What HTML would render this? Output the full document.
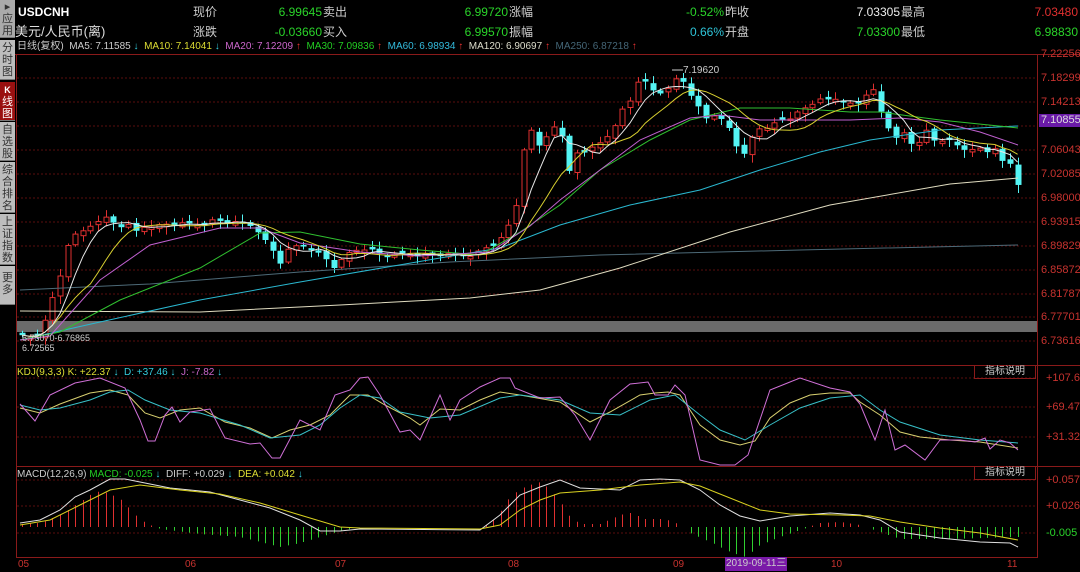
<!DOCTYPE html>
<html><head><meta charset="utf-8">
<style>
*{margin:0;padding:0;box-sizing:border-box}
body{width:1080px;height:571px;background:#000;overflow:hidden;position:relative;font-family:"Liberation Sans","Noto Sans CJK SC",sans-serif;font-size:12px;color:#ccc}
.t{position:absolute;white-space:nowrap;line-height:14px;z-index:2}
.sb{position:absolute;left:0;width:15px;background:#bdbdbd;color:#333;font-size:11px;line-height:12px;text-align:center;border-bottom:1px solid #777;z-index:2}
.r{text-align:right}
.ax{position:absolute;left:1041px;color:#c8332f;font-size:11px;line-height:12px;z-index:2}
svg{position:absolute;left:0;top:0;z-index:1}
</style></head><body>
<div class="sb" style="top:0;height:38px;padding-top:1px;background:#aaa">▸<br>应<br>用</div>
<div class="sb" style="top:40px;height:40px;padding-top:2px">分<br>时<br>图</div>
<div class="sb" style="top:82px;height:39px;padding-top:2px;background:#9a1010;color:#fff"><b style="font-size:9px">K</b><br>线<br>图</div>
<div class="sb" style="top:122px;height:39px;padding-top:2px">自<br>选<br>股</div>
<div class="sb" style="top:162px;height:51px;padding-top:2px">综<br>合<br>排<br>名</div>
<div class="sb" style="top:214px;height:51px;padding-top:2px">上<br>证<br>指<br>数</div>
<div class="sb" style="top:266px;height:39px;padding-top:6px">更<br>多</div>

<svg id="s" width="1080" height="571" xmlns="http://www.w3.org/2000/svg">
<g stroke="#5a0e0e" stroke-width="1" stroke-dasharray="2,2">
<line x1="17" y1="78" x2="1037" y2="78"/><line x1="17" y1="102" x2="1037" y2="102"/><line x1="17" y1="126" x2="1037" y2="126"/><line x1="17" y1="150" x2="1037" y2="150"/><line x1="17" y1="174" x2="1037" y2="174"/><line x1="17" y1="198" x2="1037" y2="198"/><line x1="17" y1="222" x2="1037" y2="222"/><line x1="17" y1="246" x2="1037" y2="246"/><line x1="17" y1="270" x2="1037" y2="270"/><line x1="17" y1="294" x2="1037" y2="294"/><line x1="17" y1="317" x2="1037" y2="317"/><line x1="17" y1="341" x2="1037" y2="341"/>
<line x1="17" y1="378" x2="1037" y2="378"/><line x1="17" y1="407" x2="1037" y2="407"/><line x1="17" y1="437" x2="1037" y2="437"/>
<line x1="17" y1="480" x2="1037" y2="480"/><line x1="17" y1="506" x2="1037" y2="506"/><line x1="17" y1="533" x2="1037" y2="533"/>
</g>
<g stroke="#8a1a1a" stroke-width="1" fill="none">
<line x1="0" y1="54.5" x2="1080" y2="54.5"/>
<line x1="16.5" y1="54" x2="16.5" y2="558"/>
<line x1="1037.5" y1="54" x2="1037.5" y2="558"/>
<line x1="16" y1="365.5" x2="1080" y2="365.5"/>
<line x1="16" y1="466.5" x2="1080" y2="466.5"/>
<line x1="16" y1="557.5" x2="1038" y2="557.5"/>
</g>
<rect x="17" y="321" width="1020" height="11" fill="#6b6b6b"/>
<g id="g"></g>
</svg>

<div class="t" style="left:18px;top:5px;color:#fff;font-weight:bold">USDCNH</div>
<div class="t" style="left:15px;top:25px;color:#ddd;font-size:13px">美元/人民币(离)</div>
<div class="t" style="left:193px;top:5px">现价</div>
<div class="t" style="left:193px;top:25px">涨跌</div>
<div class="t r" style="left:250px;width:72px;top:5px;color:#2ad42a">6.99645</div>
<div class="t r" style="left:250px;width:72px;top:25px;color:#2ad42a">-0.03660</div>
<div class="t" style="left:323px;top:5px">卖出</div>
<div class="t" style="left:323px;top:25px">买入</div>
<div class="t r" style="left:436px;width:72px;top:5px;color:#2ad42a">6.99720</div>
<div class="t r" style="left:436px;width:72px;top:25px;color:#2ad42a">6.99570</div>
<div class="t" style="left:509px;top:5px">涨幅</div>
<div class="t" style="left:509px;top:25px">振幅</div>
<div class="t r" style="left:652px;width:72px;top:5px;color:#2ad42a">-0.52%</div>
<div class="t r" style="left:652px;width:72px;top:25px;color:#2fc4d8">0.66%</div>
<div class="t" style="left:725px;top:5px">昨收</div>
<div class="t" style="left:725px;top:25px">开盘</div>
<div class="t r" style="left:828px;width:72px;top:5px;color:#eee">7.03305</div>
<div class="t r" style="left:828px;width:72px;top:25px;color:#2ad42a">7.03300</div>
<div class="t" style="left:901px;top:5px">最高</div>
<div class="t" style="left:901px;top:25px">最低</div>
<div class="t r" style="left:1006px;width:72px;top:5px;color:#e03030">7.03480</div>
<div class="t r" style="left:1006px;width:72px;top:25px;color:#2ad42a">6.98830</div>

<div class="t" style="left:17px;top:40px;font-size:10px;color:#ccc">日线(复权)&nbsp; MA5: 7.11585 <span style="color:#3cd">↓</span>&nbsp;&nbsp;<span style="color:#dd3">MA10: 7.14041</span> <span style="color:#3cd">↓</span>&nbsp;&nbsp;<span style="color:#c6c">MA20: 7.12209</span> <span style="color:#e33">↑</span>&nbsp;&nbsp;<span style="color:#2c2">MA30: 7.09836</span> <span style="color:#e33">↑</span>&nbsp;&nbsp;<span style="color:#3bd">MA60: 6.98934</span> <span style="color:#e33">↑</span>&nbsp;&nbsp;<span style="color:#ddc">MA120: 6.90697</span> <span style="color:#e33">↑</span>&nbsp;&nbsp;<span style="color:#467">MA250: 6.87218</span> <span style="color:#e33">↑</span></div>

<div class="ax" style="top:48px">7.22256</div>
<div class="ax" style="top:72px">7.18299</div>
<div class="ax" style="top:96px">7.14213</div>
<div class="ax" style="top:144px">7.06043</div>
<div class="ax" style="top:168px">7.02085</div>
<div class="ax" style="top:192px">6.98000</div>
<div class="ax" style="top:216px">6.93915</div>
<div class="ax" style="top:240px">6.89829</div>
<div class="ax" style="top:264px">6.85872</div>
<div class="ax" style="top:288px">6.81787</div>
<div class="ax" style="top:311px">6.77701</div>
<div class="ax" style="top:335px">6.73616</div>
<div class="ax" style="top:114px;left:1039px;width:41px;height:13px;background:#6a1aa8;color:#ddd;padding-left:2px">7.10855</div>
<div class="ax" style="top:372px;left:1046px">+107.6</div>
<div class="ax" style="top:401px;left:1046px">+69.47</div>
<div class="ax" style="top:431px;left:1046px">+31.32</div>
<div class="ax" style="top:474px;left:1046px">+0.057</div>
<div class="ax" style="top:500px;left:1046px">+0.026</div>
<div class="ax" style="top:527px;left:1046px;color:#2ad42a">-0.005</div>

<div class="t" style="left:17px;top:366px;font-size:10px;color:#dd3">KDJ(9,3,3) K: +22.37 <span style="color:#3cd">↓</span>&nbsp; <span style="color:#3cd">D: +37.46 ↓</span>&nbsp; <span style="color:#c6c">J: -7.82</span> <span style="color:#3cd">↓</span></div>
<div class="t" style="left:17px;top:468px;font-size:10px;color:#ccc">MACD(12,26,9) <span style="color:#2c2">MACD: -0.025</span> <span style="color:#3cd">↓</span>&nbsp; DIFF: +0.029 <span style="color:#3cd">↓</span>&nbsp; <span style="color:#dd3">DEA: +0.042</span> <span style="color:#3cd">↓</span></div>
<div class="t" style="left:974px;top:366px;width:62px;height:13px;border:1px solid #8a1a1a;border-top:none;font-size:10px;line-height:12px;text-align:center">指标说明</div>
<div class="t" style="left:974px;top:467px;width:62px;height:13px;border:1px solid #8a1a1a;border-top:none;font-size:10px;line-height:12px;text-align:center">指标说明</div>

<div class="t" style="left:18px;top:558px;color:#c8332f;font-size:10px">05</div>
<div class="t" style="left:185px;top:558px;color:#c8332f;font-size:10px">06</div>
<div class="t" style="left:335px;top:558px;color:#c8332f;font-size:10px">07</div>
<div class="t" style="left:508px;top:558px;color:#c8332f;font-size:10px">08</div>
<div class="t" style="left:673px;top:558px;color:#c8332f;font-size:10px">09</div>
<div class="t" style="left:725px;top:557px;background:#7a1aa8;color:#ccc;font-size:10px;padding:0 1px">2019-09-11三</div>
<div class="t" style="left:831px;top:558px;color:#c8332f;font-size:10px">10</div>
<div class="t" style="left:1007px;top:558px;color:#c8332f;font-size:10px">11</div>
<div class="t" style="left:683px;top:64px;color:#ccc;font-size:10px">7.19620</div>
<div class="t" style="left:22px;top:331px;color:#ccc;font-size:9px">6.75070-6.76865</div>
<div class="t" style="left:22px;top:341px;color:#ccc;font-size:9px">6.72565</div>

<script>
(function(){
var NS="http://www.w3.org/2000/svg",G=document.getElementById("g");
function el(t,a){var e=document.createElementNS(NS,t);for(var k in a)e.setAttribute(k,a[k]);G.appendChild(e);return e}
function pl(pts,c,w){el("polyline",{points:pts.map(function(p){return p[0]+","+p[1]}).join(" "),fill:"none",stroke:c,"stroke-width":w||1})}
function interp(k,x){for(var i=0;i<k.length-1;i++){if(x<=k[i+1][0]){var a=k[i],b=k[i+1];return a[1]+(b[1]-a[1])*(x-a[0])/(b[0]-a[0])}}return k[k.length-1][1]}
var K=[[22,337],[30,338],[37,336],[45,318],[52,300],[60,276],[67,245],[75,236],[82,232],[90,226],[97,220],[105,218],[112,222],[120,226],[128,226],[135,232],[143,227],[150,225],[158,226],[165,224],[175,225],[190,224],[200,225],[215,220],[225,222],[240,224],[255,226],[262,238],[270,246],[280,263],[290,248],[300,245],[310,248],[320,255],[330,262],[336,270],[345,255],[355,250],[365,248],[375,252],[385,256],[395,256],[405,253],[420,255],[440,255],[460,256],[475,254],[485,248],[495,244],[505,236],[512,215],[518,200],[523,150],[530,128],[537,148],[545,137],[552,130],[560,125],[567,178],[575,150],[583,155],[591,148],[598,142],[605,140],[612,135],[620,110],[628,105],[635,85],[643,80],[650,85],[658,97],[665,92],[672,85],[680,70],[688,95],[695,100],[703,115],[710,120],[718,115],[725,125],[733,130],[740,160],[748,150],[755,125],[763,130],[770,130],[778,118],[785,120],[793,115],[800,112],[808,105],[815,102],[823,100],[830,100],[838,98],[845,102],[852,105],[860,103],[868,90],[875,92],[883,120],[890,130],[898,138],[905,133],[913,147],[920,140],[928,130],[935,143],[943,140],[950,138],[958,148],[965,150],[973,148],[980,150],[988,153],[995,148],[1003,160],[1010,165],[1018,186]];
var N=132,cl=[],xs=[];
for(var i=0;i<N;i++){var x=22+i*7.6;xs.push(x);cl.push(interp(K,x)+((i*37)%7-3)*0.6)}
var prev=cl[0]+3;
for(var i=0;i<N;i++){var o=prev+(((i*13)%5)-2)*0.8,c=cl[i];if(Math.abs(o-c)<1.5){o=c+((i%2)?2.5:-2.5)}
var up=c<o,col=up?"#e03030":"#54f4f4",xx=Math.round(xs[i])+0.5,tp=Math.min(o,c),bt=Math.max(o,c);
var hi=tp-2-((i*7)%6),lo=bt+2+((i*11)%7);
el("line",{x1:xx,y1:hi,x2:xx,y2:lo,stroke:col});
if(up)el("rect",{x:xx-2.5,y:tp,width:5,height:bt-tp,fill:"#000",stroke:col});
else el("rect",{x:xx-3,y:tp,width:6,height:Math.max(1,bt-tp),fill:col});
prev=c}
function ma(n){var r=[];for(var i=0;i<N;i++){var s=0,m=0;for(var j=Math.max(0,i-n+1);j<=i;j++){s+=cl[j];m++}r.push([xs[i],(s/m).toFixed(1)])}return r}
pl([[20,290],[150,284],[300,272],[450,262],[600,255],[800,250],[1018,245]],"#4d6a78");
pl([[20,311],[200,312],[340,305],[470,298],[540,290],[620,268],[730,232],[830,205],[950,184],[1018,178]],"#e0dcc0");
pl([[20,340],[100,322],[200,300],[300,282],[440,258],[500,248],[560,225],[630,205],[700,190],[760,170],[820,152],[870,140],[940,130],[1018,126]],"#2ab8d0");
pl([[20,340],[60,332],[120,300],[200,268],[260,233],[300,232],[360,244],[420,250],[480,255],[520,232],[560,205],[600,170],[650,140],[690,120],[740,108],[790,108],[850,112],[880,112],[940,120],[1018,128]],"#30c030");
pl([[20,340],[50,336],[100,280],[150,245],[220,228],[260,228],[300,243],[360,252],[420,256],[490,252],[530,226],[560,200],[600,170],[640,140],[690,118],[720,115],[760,120],[800,120],[850,120],[900,118],[940,122],[980,132],[1018,145]],"#c060d0");
pl(ma(10),"#d8d030");pl(ma(5),"#e8e8e8");
el("line",{x1:672,y1:70,x2:683,y2:70,stroke:"#ccc"});
pl([[20,408],[40,413],[60,404],[90,393],[110,390],[128,395],[145,413],[160,418],[180,410],[200,408],[225,422],[250,428],[272,438],[290,430],[310,425],[330,415],[350,395],[368,395],[385,405],[410,418],[420,425],[440,409],[460,410],[480,400],[500,392],[520,395],[560,402],[590,422],[610,412],[640,395],[655,393],[668,392],[680,395],[700,425],[720,440],[740,445],[755,441],[770,418],[790,403],[810,395],[830,393],[850,393],[860,402],[880,415],[900,432],[920,437],[950,440],[980,442],[1018,448]],"#d8d070");
pl([[20,405],[40,410],[60,408],[90,400],[110,392],[128,390],[145,400],[170,410],[200,413],[240,425],[270,438],[300,435],[320,425],[340,408],[360,395],[380,398],[400,412],[430,418],[460,415],[500,398],[520,395],[560,400],[590,413],[620,415],[650,400],[675,395],[700,415],[720,430],[745,440],[770,425],[800,408],[830,398],[860,395],[880,410],[900,422],[940,435],[980,440],[1018,443]],"#38c0c8");
pl([[20,404],[35,421],[50,395],[75,383],[100,378],[125,388],[140,420],[148,441],[155,441],[165,415],[172,407],[180,422],[190,412],[210,409],[225,438],[250,444],[260,443],[272,458],[280,458],[300,420],[320,430],[335,395],[350,390],[360,378],[368,377],[380,395],[400,432],[410,430],[420,440],[440,395],[450,420],[460,400],[480,387],[500,378],[510,378],[515,388],[540,398],[560,397],[575,415],[590,440],[610,400],[630,384],[648,382],[655,395],[668,395],[675,385],[685,395],[700,460],[720,465],[735,465],[748,455],[770,390],[790,382],[800,378],[830,388],[850,392],[860,404],[875,440],[885,410],[895,450],[905,445],[925,460],[940,440],[960,440],[975,442],[985,438],[990,449],[1000,440],[1010,443],[1018,450]],"#d070d8");
var H=[[20,3],[40,4],[60,12],[80,25],[90,32],[100,36],[110,33],[120,28],[130,18],[140,7],[150,2],[160,-2],[200,-7],[240,-10],[260,-15],[280,-20],[300,-16],[320,-10],[340,-4],[360,0],[480,0],[490,4],[500,15],[510,30],[520,38],[530,42],[540,45],[550,38],[560,25],[570,10],[580,3],[600,3],[620,12],[630,14],[645,8],[665,8],[680,2],[690,-6],[710,-15],[730,-25],[745,-30],[760,-18],[780,-10],[800,-3],[820,4],[840,5],[860,2],[880,-5],[900,-12],[950,-12],[1018,-10]];
for(var i=0;i<N;i++){var h=interp(H,xs[i]);if(Math.abs(h)<0.8)continue;var xx=Math.round(xs[i])+0.5;el("line",{x1:xx,y1:527,x2:xx,y2:527-h,stroke:h>0?"#e03030":"#30d030"})}
pl([[20,523],[40,520],[60,510],[75,497],[90,490],[110,479],[125,479],[140,482],[170,488],[210,492],[240,500],[270,508],[300,520],[320,531],[340,531],[360,529],[480,530],[500,515],[520,495],[540,487],[560,480],[580,488],[600,489],[620,490],[640,480],[660,479],[680,480],[700,490],[720,505],[740,516],[760,521],[790,516],[830,513],[860,515],[880,520],[900,532],[940,538],[980,542],[1010,543],[1018,547]],"#e0e0e0");
pl([[20,525],[50,520],[80,505],[110,490],[140,485],[180,490],[220,494],[260,503],[300,515],[340,527],[360,528],[480,529],[500,525],[520,510],[540,500],[560,493],[600,490],[640,485],[680,482],[700,486],[720,494],[760,510],[790,514],[840,515],[870,516],[900,522],[940,528],[980,533],[1018,540]],"#d8d020");
})();
</script>
</body></html>
